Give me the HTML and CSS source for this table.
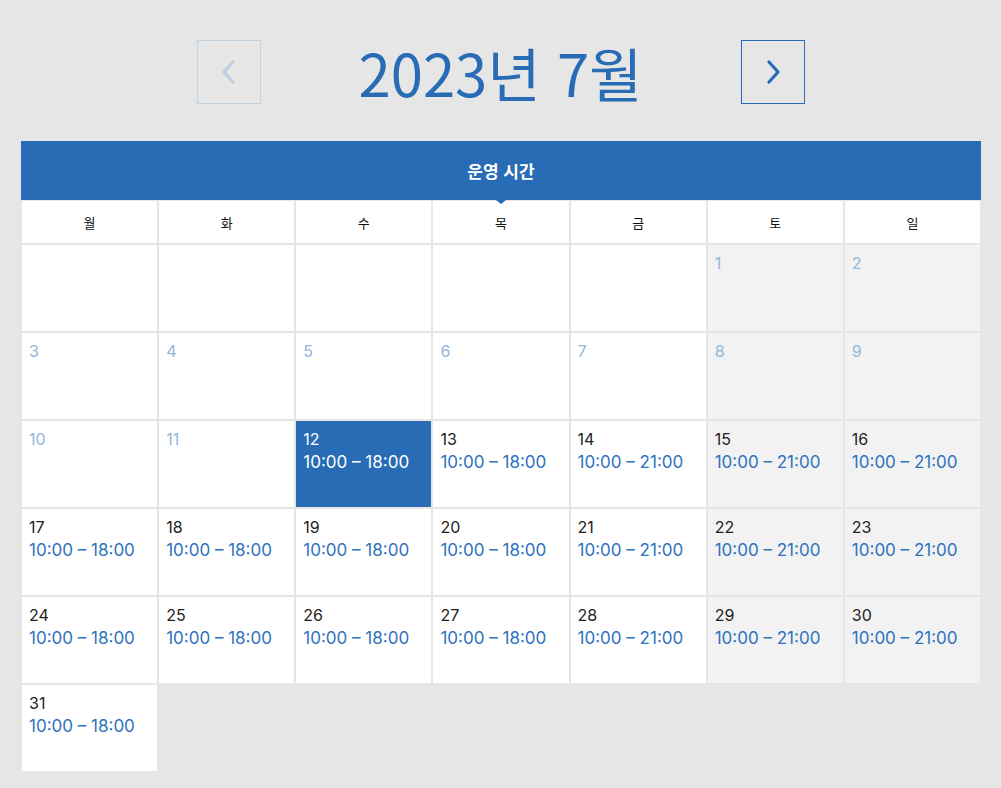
FILE: index.html
```html
<!DOCTYPE html>
<html lang="ko">
<head>
<meta charset="utf-8">
<title>운영 시간</title>
<link rel="stylesheet" href="styles.css">
</head>
<body>
<div class="page">
  <div class="nav">
    <button class="nav-btn prev" aria-label="이전 달">
      <svg width="20" height="28" viewBox="0 0 20 28"><path d="M14 4 L5 14 L14 24" fill="none" stroke="currentColor" stroke-width="3.2" stroke-linecap="round" stroke-linejoin="round"/></svg>
    </button>
    <h1 class="title">2023년 7월</h1>
    <button class="nav-btn next" aria-label="다음 달">
      <svg width="20" height="28" viewBox="0 0 20 28"><path d="M6 4 L15 14 L6 24" fill="none" stroke="currentColor" stroke-width="3.2" stroke-linecap="round" stroke-linejoin="round"/></svg>
    </button>
  </div>

  <div class="calendar">
    <div class="cal-head">운영 시간</div>
    <div class="grid">
      <div class="dow">월</div><div class="dow">화</div><div class="dow">수</div><div class="dow">목</div><div class="dow">금</div><div class="dow">토</div><div class="dow">일</div>

      <div class="cell"></div><div class="cell"></div><div class="cell"></div><div class="cell"></div><div class="cell"></div>
      <div class="cell wk past"><span class="num">1</span></div>
      <div class="cell wk past"><span class="num">2</span></div>

      <div class="cell past"><span class="num">3</span></div>
      <div class="cell past"><span class="num">4</span></div>
      <div class="cell past"><span class="num">5</span></div>
      <div class="cell past"><span class="num">6</span></div>
      <div class="cell past"><span class="num">7</span></div>
      <div class="cell wk past"><span class="num">8</span></div>
      <div class="cell wk past"><span class="num">9</span></div>

      <div class="cell past"><span class="num">10</span></div>
      <div class="cell past"><span class="num">11</span></div>
      <div class="cell sel"><span class="num">12</span><span class="time">10:00 – 18:00</span></div>
      <div class="cell"><span class="num">13</span><span class="time">10:00 – 18:00</span></div>
      <div class="cell"><span class="num">14</span><span class="time">10:00 – 21:00</span></div>
      <div class="cell wk"><span class="num">15</span><span class="time">10:00 – 21:00</span></div>
      <div class="cell wk"><span class="num">16</span><span class="time">10:00 – 21:00</span></div>

      <div class="cell"><span class="num">17</span><span class="time">10:00 – 18:00</span></div>
      <div class="cell"><span class="num">18</span><span class="time">10:00 – 18:00</span></div>
      <div class="cell"><span class="num">19</span><span class="time">10:00 – 18:00</span></div>
      <div class="cell"><span class="num">20</span><span class="time">10:00 – 18:00</span></div>
      <div class="cell"><span class="num">21</span><span class="time">10:00 – 21:00</span></div>
      <div class="cell wk"><span class="num">22</span><span class="time">10:00 – 21:00</span></div>
      <div class="cell wk"><span class="num">23</span><span class="time">10:00 – 21:00</span></div>

      <div class="cell"><span class="num">24</span><span class="time">10:00 – 18:00</span></div>
      <div class="cell"><span class="num">25</span><span class="time">10:00 – 18:00</span></div>
      <div class="cell"><span class="num">26</span><span class="time">10:00 – 18:00</span></div>
      <div class="cell"><span class="num">27</span><span class="time">10:00 – 18:00</span></div>
      <div class="cell"><span class="num">28</span><span class="time">10:00 – 21:00</span></div>
      <div class="cell wk"><span class="num">29</span><span class="time">10:00 – 21:00</span></div>
      <div class="cell wk"><span class="num">30</span><span class="time">10:00 – 21:00</span></div>

      <div class="cell"><span class="num">31</span><span class="time">10:00 – 18:00</span></div>
    </div>
  </div>
</div>
</body>
</html>
```

FILE: styles.css
```css
html, body {
  margin: 0;
  padding: 0;
  background: #e6e6e6;
}
body {
  font-family: "Inter", "Noto Sans CJK KR", sans-serif;
  color: #222;
}
.page {
  padding: 40px 20px 17px 21px;
}
.nav {
  display: flex;
  justify-content: center;
  align-items: center;
  margin-left: -1px;
}
.nav-btn {
  width: 64px;
  height: 64px;
  box-sizing: border-box;
  background: transparent;
  padding: 0;
  margin: 0;
  display: flex;
  align-items: center;
  justify-content: center;
}
.nav-btn.prev {
  border: 1px solid #c3d2e1;
  color: #bccfe2;
}
.nav-btn.next {
  border: 1px solid #276cb5;
  color: #276cb5;
}
.title {
  width: 480px;
  margin: 0;
  text-align: center;
  font-family: "Noto Sans CJK KR", sans-serif;
  font-weight: 400;
  font-size: 58px;
  line-height: 64px;
  color: #276cb5;
}
.calendar {
  margin-top: 37px;
  width: 960px;
}
.cal-head {
  position: relative;
  background: #276cb5;
  color: #fff;
  height: 59px;
  display: flex;
  align-items: center;
  justify-content: center;
  font-family: "Noto Sans CJK KR", sans-serif;
  font-weight: 700;
  font-size: 17px;
}
.cal-head::after {
  content: "";
  position: absolute;
  left: 50%;
  bottom: -4px;
  margin-left: -5px;
  border-left: 5px solid transparent;
  border-right: 5px solid transparent;
  border-top: 4px solid #276cb5;
}
.grid {
  display: grid;
  grid-template-columns: repeat(7, 1fr);
  grid-template-rows: 44px;
  grid-auto-rows: 88px;
}
.dow {
  background: #fff;
  border: 1px solid #e6e6e6;
  display: flex;
  align-items: center;
  justify-content: center;
  font-family: "Noto Sans CJK KR", sans-serif;
  font-size: 13px;
  color: #111;
}
.cell {
  background: #fff;
  border: 1px solid #e6e6e6;
  padding: 7px 7px;
  display: flex;
  flex-direction: column;
  font-family: "Inter", sans-serif;
}
.cell.wk {
  background: #f2f2f2;
}
.num {
  font-size: 16px;
  line-height: 22px;
  color: #222;
  font-weight: 400;
}
.time {
  font-size: 17px;
  line-height: 24px;
  color: #2f72bd;
  font-weight: 400;
}
.cell.past .num {
  color: #93b6de;
}
.cell.sel {
  background: #276cb5;
}
.cell.sel .num,
.cell.sel .time {
  color: #fff;
}
```
